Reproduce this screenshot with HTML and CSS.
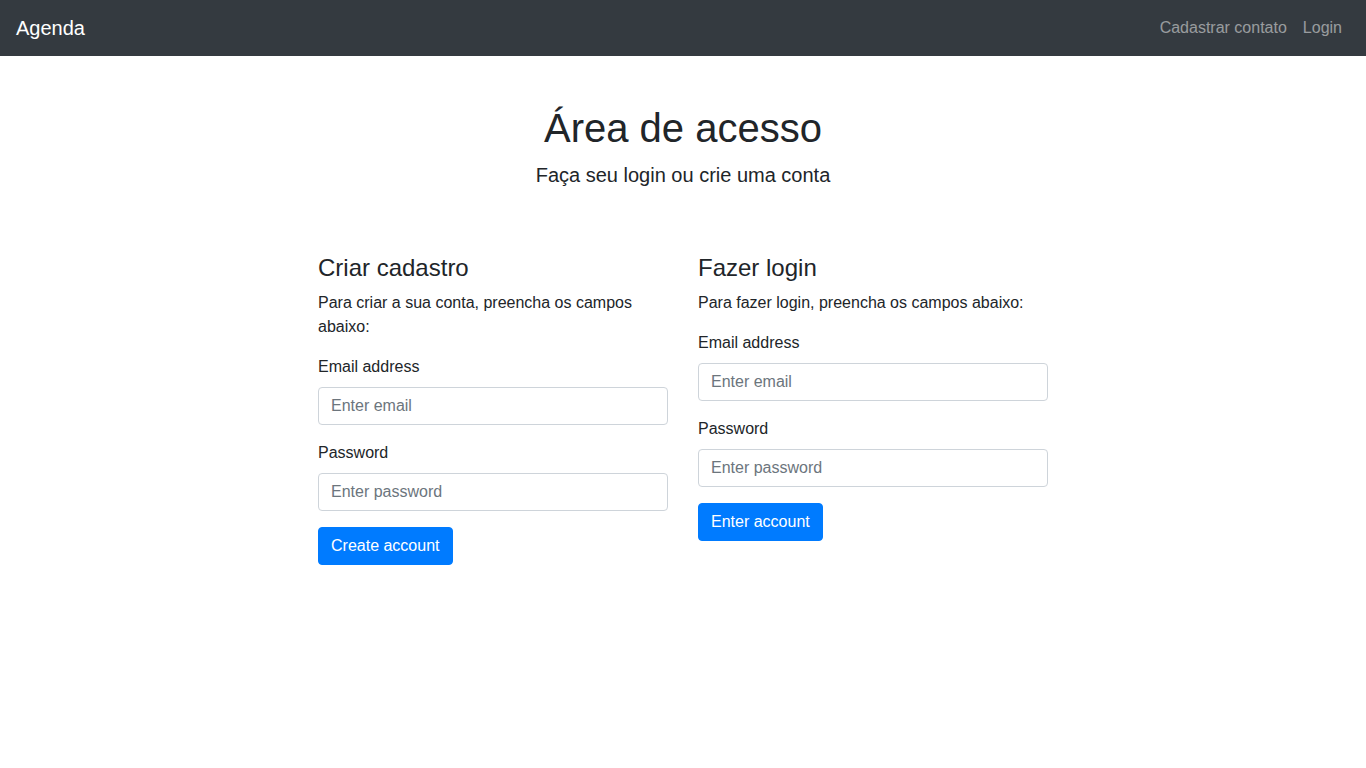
FILE: index.html
```html
<!DOCTYPE html>
<html lang="pt-BR">
<head>
<meta charset="utf-8">
<title>Agenda</title>
<link rel="stylesheet" href="styles.css">
</head>
<body>
<nav class="navbar">
  <a class="brand" href="#">Agenda</a>
  <ul class="nav">
    <li><a class="nav-link" href="#">Cadastrar contato</a></li>
    <li><a class="nav-link" href="#">Login</a></li>
  </ul>
</nav>
<main class="container">
  <header class="intro">
    <h1 class="title">Área de acesso</h1>
    <p class="lead">Faça seu login ou crie uma conta</p>
  </header>
  <div class="row">
    <section class="col">
      <h4 class="col-title">Criar cadastro</h4>
      <p class="desc">Para criar a sua conta, preencha os campos abaixo:</p>
      <form>
        <div class="form-group">
          <label class="label">Email address</label>
          <input class="input" type="email" placeholder="Enter email">
        </div>
        <div class="form-group">
          <label class="label">Password</label>
          <input class="input" type="password" placeholder="Enter password">
        </div>
        <button class="btn" type="button">Create account</button>
      </form>
    </section>
    <section class="col">
      <h4 class="col-title">Fazer login</h4>
      <p class="desc">Para fazer login, preencha os campos abaixo:</p>
      <form>
        <div class="form-group">
          <label class="label">Email address</label>
          <input class="input" type="email" placeholder="Enter email">
        </div>
        <div class="form-group">
          <label class="label">Password</label>
          <input class="input" type="password" placeholder="Enter password">
        </div>
        <button class="btn" type="button">Enter account</button>
      </form>
    </section>
  </div>
</main>
</body>
</html>
```

FILE: styles.css
```css
* { box-sizing: border-box; }
html, body {
  margin: 0;
  padding: 0;
  background: #fff;
}
body {
  font-family: "Liberation Sans", Arial, sans-serif;
  font-size: 16px;
  line-height: 1.5;
  color: #212529;
}
.navbar {
  display: flex;
  align-items: center;
  justify-content: space-between;
  background: #343a40;
  padding: 8px 16px;
  height: 56px;
}
.brand {
  color: #fff;
  font-size: 20px;
  line-height: 30px;
  padding: 5px 0;
  text-decoration: none;
}
.nav {
  display: flex;
  list-style: none;
  margin: 0;
  padding: 0;
}
.nav-link {
  display: block;
  padding: 8px 8px;
  color: rgba(255, 255, 255, 0.5);
  text-decoration: none;
  line-height: 24px;
}
.container {
  width: 760px;
  margin: 0 auto;
}
.intro {
  text-align: center;
  padding-top: 48px;
}
.title {
  font-size: 40px;
  line-height: 1.2;
  font-weight: 400;
  margin: 0 0 8px;
}
.lead {
  font-size: 20px;
  line-height: 30px;
  margin: 0 0 16px;
}
.row {
  display: flex;
  margin-top: 64px;
}
.col {
  width: 380px;
  padding: 0 15px;
}
.col-title {
  font-size: 24px;
  line-height: 1.2;
  font-weight: 400;
  margin: 0 0 8px;
}
.desc {
  margin: 0 0 16px;
}
.form-group {
  margin-bottom: 16px;
}
.label {
  display: block;
  margin-bottom: 8px;
}
.input {
  display: block;
  width: 100%;
  height: 38px;
  padding: 6px 12px;
  font-family: inherit;
  font-size: 16px;
  line-height: 1.5;
  color: #495057;
  background: #fff;
  border: 1px solid #ced4da;
  border-radius: 4px;
  outline: none;
}
.input::placeholder {
  color: #6c757d;
  opacity: 1;
}
.btn {
  display: inline-block;
  font-family: inherit;
  font-size: 16px;
  line-height: 1.5;
  padding: 6px 12px;
  color: #fff;
  background: #007bff;
  border: 1px solid #007bff;
  border-radius: 4px;
  cursor: pointer;
}
```
